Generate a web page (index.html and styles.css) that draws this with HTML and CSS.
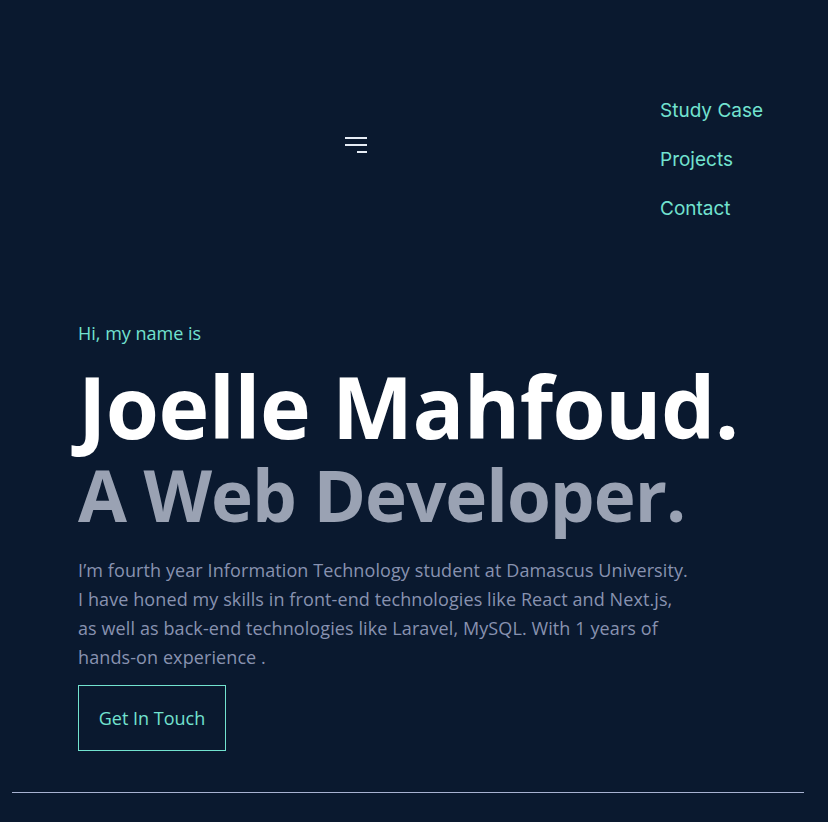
FILE: index.html
```html
<!DOCTYPE html>
<html lang="en">
<head>
<meta charset="utf-8">
<title>Joelle Mahfoud</title>
<link rel="stylesheet" href="styles.css">
</head>
<body>
<header class="header">
  <button class="menu-btn" aria-label="Menu">
    <svg width="22" height="18" viewBox="0 0 22 18">
      <rect x="0" y="1" width="22" height="2" fill="#e6ecf5"/>
      <rect x="0" y="8" width="22" height="2" fill="#e6ecf5"/>
      <rect x="12" y="15" width="10" height="2" fill="#e6ecf5"/>
    </svg>
  </button>
  <nav class="nav">
    <a href="#">Study Case</a>
    <a href="#">Projects</a>
    <a href="#">Contact</a>
  </nav>
</header>
<main class="hero">
  <p class="hello">Hi, my name is</p>
  <h1 class="name">Joelle Mahfoud.</h1>
  <h2 class="role">A Web Developer.</h2>
  <p class="intro">I’m fourth year Information Technology student at Damascus University.<br>I have honed my skills in front-end technologies like React and Next.js,<br>as well as back-end technologies like Laravel, MySQL. With 1 years of<br>hands-on experience .</p>
  <a class="cta" href="#">Get In Touch</a>
</main>
<hr class="divider">
</body>
</html>
```
FILE: styles.css
```css
* { box-sizing: border-box; }
html, body { margin: 0; padding: 0; }
body {
  background: #0a192f;
  font-family: "Open Sans", "Noto Sans", sans-serif;
  width: 828px;
  height: 822px;
  overflow: hidden;
}
.header {
  display: flex;
  justify-content: space-between;
  align-items: flex-start;
  padding: 97px 64px 0 345px;
  height: 316px;
}
.menu-btn {
  background: none;
  border: none;
  padding: 0;
  margin-top: 39px;
  display: block;
  line-height: 0;
}
.nav {
  display: flex;
  flex-direction: column;
  gap: 22px;
  width: 104px;
}
.nav a {
  font-family: "Inter", sans-serif;
  font-size: 19px;
  line-height: 27px;
  color: #72e2cf;
  text-decoration: none;
  white-space: nowrap;
}
.hero {
  padding: 0 0 0 78px;
}
.hello {
  margin: 0;
  font-size: 18px;
  line-height: 34px;
  color: #72e2cf;
}
.name {
  margin: 11px 0 0;
  font-size: 86px;
  font-weight: 700;
  line-height: 90px;
  color: #ffffff;
  letter-spacing: -0.6px;
}
.role {
  margin: 4px 0 0;
  font-size: 71px;
  font-weight: 700;
  line-height: 80px;
  color: #9aa2b3;
  letter-spacing: -1px;
}
.intro {
  margin: 21px 0 0;
  font-size: 18px;
  line-height: 29px;
  color: #8892b0;
  letter-spacing: 0.1px;
}
.cta {
  display: inline-block;
  margin-top: 13px;
  width: 148px;
  height: 66px;
  line-height: 64px;
  text-align: center;
  border: 1px solid #72e2cf;
  color: #72e2cf;
  font-size: 18px;
  text-decoration: none;
}
.divider {
  margin: 41px 0 0 12px;
  width: 792px;
  border: none;
  border-top: 1px solid #a8b2d1;
  height: 0;
}
```
